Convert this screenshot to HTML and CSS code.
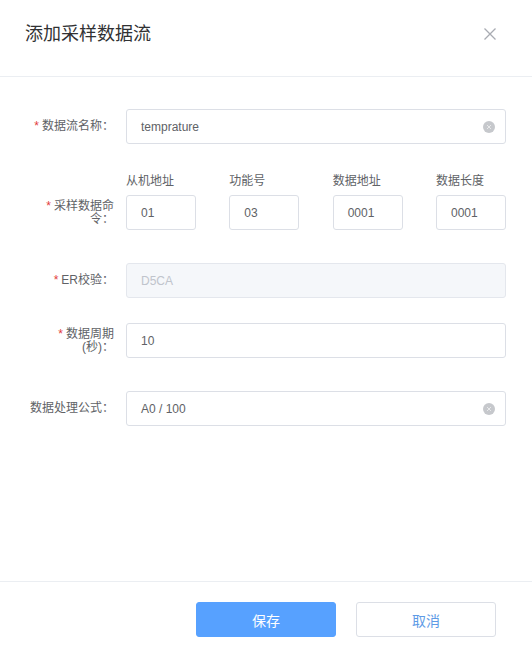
FILE: index.html
```html
<!DOCTYPE html>
<html lang="zh-CN">

<head>
    <meta charset="UTF-8">
    <meta name="viewport" content="width=device-width, initial-scale=1.0">
    <title>添加采样数据流</title>
    <link rel="stylesheet" href="styles.css">
</head>

<body>
    <div class="dialog">
        <!-- Header -->
        <div class="dialog-header">
            <span class="dialog-title">添加采样数据流</span>
            <svg class="close-icon" width="14" height="14" viewBox="0 0 14 14">
                <path d="M1.5 1.5 L12.5 12.5 M12.5 1.5 L1.5 12.5" stroke="#a8abb2" stroke-width="1.3" fill="none" />
            </svg>
        </div>

        <!-- Form body -->
        <div class="dialog-body">
            <div class="form-row row-name">
                <label class="form-label"><span><span class="required">*</span>数据流名称：</span></label>
                <div class="field">
                    <span class="field-text">temprature</span>
                    <span class="clear-icon">
                        <svg width="12" height="12" viewBox="0 0 12 12">
                            <circle cx="6" cy="6" r="6" fill="#c6c8cc" />
                            <path d="M4 4 L8 8 M8 4 L4 8" stroke="#ffffff" stroke-width="1" opacity="0.6" />
                        </svg>
                    </span>
                </div>
            </div>

            <div class="form-row row-command">
                <label class="form-label"><span><span class="required">*</span>采样数据命令：</span></label>
                <div class="command-cols">
                    <div class="command-col">
                        <div class="sub-label">从机地址</div>
                        <div class="field small"><span class="field-text">01</span></div>
                    </div>
                    <div class="command-col">
                        <div class="sub-label">功能号</div>
                        <div class="field small"><span class="field-text">03</span></div>
                    </div>
                    <div class="command-col">
                        <div class="sub-label">数据地址</div>
                        <div class="field small"><span class="field-text">0001</span></div>
                    </div>
                    <div class="command-col">
                        <div class="sub-label">数据长度</div>
                        <div class="field small"><span class="field-text">0001</span></div>
                    </div>
                </div>
            </div>

            <div class="form-row row-check">
                <label class="form-label"><span><span class="required">*</span>ER校验：</span></label>
                <div class="field disabled"><span class="field-text">D5CA</span></div>
            </div>

            <div class="form-row row-period">
                <label class="form-label"><span><span class="required">*</span>数据周期(秒)：</span></label>
                <div class="field"><span class="field-text">10</span></div>
            </div>

            <div class="form-row row-formula">
                <label class="form-label"><span>数据处理公式：</span></label>
                <div class="field">
                    <span class="field-text">A0 / 100</span>
                    <span class="clear-icon">
                        <svg width="12" height="12" viewBox="0 0 12 12">
                            <circle cx="6" cy="6" r="6" fill="#c6c8cc" />
                            <path d="M4 4 L8 8 M8 4 L4 8" stroke="#ffffff" stroke-width="1" opacity="0.6" />
                        </svg>
                    </span>
                </div>
            </div>
        </div>

        <!-- Footer buttons -->
        <div class="dialog-footer">
            <button class="btn btn-primary">保存</button>
            <button class="btn btn-default">取消</button>
        </div>
    </div>
</body>

</html>
```

FILE: styles.css
```css
/* Page */
body {
    margin: 0;
    background-color: #ffffff;
    font-family: 'Liberation Sans', 'Noto Sans CJK SC', sans-serif;
}

/* Dialog frame */
.dialog {
    height: 100vh;
    display: flex;
    flex-direction: column;
}

/* Header */
.dialog-header {
    height: 77px;
    box-sizing: border-box;
    border-bottom: 1px solid #ebeef2;
    display: flex;
    align-items: flex-start;
    justify-content: space-between;
    padding: 24px 35px 0 25px;
}

.dialog-title {
    font-size: 18px;
    line-height: 20px;
    color: #303133;
}

.close-icon {
    margin-top: 3px;
}

/* Body */
.dialog-body {
    flex: 1;
    padding: 32px 26px 0 30px;
}

.form-row {
    display: flex;
    align-items: center;
}

.row-command {
    align-items: flex-end;
    margin-top: 30px;
}

.row-check {
    margin-top: 33px;
}

.row-period {
    margin-top: 25px;
}

.row-formula {
    margin-top: 33px;
}

/* Label column */
.form-label {
    width: 84px;
    flex-shrink: 0;
    padding-right: 12px;
    text-align: right;
    font-size: 12px;
    line-height: 13px;
    color: #606266;
}

.row-command .form-label {
    height: 35px;
    display: flex;
    align-items: center;
    justify-content: flex-end;
}

.required {
    color: #e23c3c;
    margin-right: 3px;
}

/* Input boxes */
.field {
    flex: 1;
    height: 35px;
    box-sizing: border-box;
    border: 1px solid #dcdfe6;
    border-radius: 3px;
    padding: 0 10px 0 14px;
    display: flex;
    align-items: center;
    justify-content: space-between;
    font-size: 12px;
    color: #606266;
}

.field.small {
    width: 70px;
    flex: none;
}

.field.disabled {
    background-color: #f5f7fa;
    border-color: #e4e7ed;
    color: #c0c4cc;
}

.clear-icon {
    display: flex;
}

/* Sampling command columns */
.command-cols {
    flex: 1;
    display: flex;
    justify-content: space-between;
}

.sub-label {
    font-size: 12px;
    line-height: 14px;
    color: #606266;
    margin-bottom: 7px;
}

/* Footer */
.dialog-footer {
    border-top: 1px solid #ebeef2;
    padding: 20px 36px 21px 0;
    display: flex;
    justify-content: flex-end;
    gap: 20px;
}

.btn {
    width: 140px;
    height: 35px;
    border-radius: 3px;
    font-family: 'Liberation Sans', 'Noto Sans CJK SC', sans-serif;
    font-size: 14px;
    cursor: pointer;
}

.btn-primary {
    background-color: #57a1ff;
    border: 1px solid #57a1ff;
    color: #ffffff;
}

.btn-default {
    background-color: #ffffff;
    border: 1px solid #dcdfe6;
    color: #5e9be6;
}
```
